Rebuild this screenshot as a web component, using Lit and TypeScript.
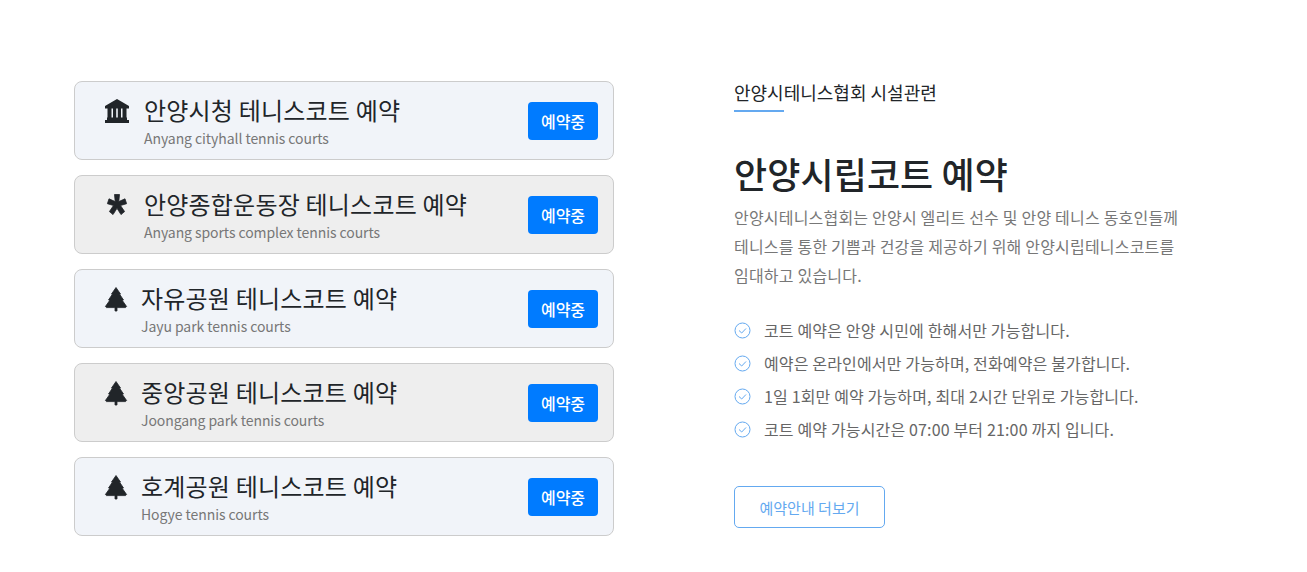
import { LitElement, html, css, svg } from "lit";
import { customElement } from "lit/decorators.js";

const bank = svg`<path d="M13 1 L25 8 V10.5 H1 V8 Z M3.5 10 H7.5 V20 H3.5 Z M9 10 H12.2 V20 H9 Z M13.8 10 H17 V20 H13.8 Z M18.5 10 H22.5 V20 H18.5 Z M3 19.5 H23 V22 H3 Z M1 22 H25 V25 H1 Z" />`;
const asterisk = svg`<path d="M10.5 2.5 H15.5 L14.8 9.6 L21 6.8 L22.6 11.7 L16.5 13.5 L20.6 19.6 L17 22.6 L13 16.3 L9 22.6 L5.4 19.6 L9.5 13.5 L3.4 11.7 L5 6.8 L11.2 9.6 Z" />`;
const tree = svg`<path d="M12 1.5 L16.5 8 H15.5 L19.5 14 H18 L22.6 20.5 L21.5 21.6 H13 V25 H11 V21.6 H2.5 L1.4 20.5 L6 14 H4.5 L8.5 8 H7.5 Z" />`;

const courts = [
  { icon: "bank", title: "안양시청 테니스코트 예약", sub: "Anyang cityhall tennis courts", alt: false },
  { icon: "asterisk", title: "안양종합운동장 테니스코트 예약", sub: "Anyang sports complex tennis courts", alt: true },
  { icon: "tree", title: "자유공원 테니스코트 예약", sub: "Jayu park tennis courts", alt: false },
  { icon: "tree", title: "중앙공원 테니스코트 예약", sub: "Joongang park tennis courts", alt: true },
  { icon: "tree", title: "호계공원 테니스코트 예약", sub: "Hogye tennis courts", alt: false },
];

const rules = [
  "코트 예약은 안양 시민에 한해서만 가능합니다.",
  "예약은 온라인에서만 가능하며, 전화예약은 불가합니다.",
  "1일 1회만 예약 가능하며, 최대 2시간 단위로 가능합니다.",
  "코트 예약 가능시간은 07:00 부터 21:00 까지 입니다.",
];

@customElement("app-root")
export class AppRoot extends LitElement {
  static styles = css`
    * {
      margin: 0;
      padding: 0;
      box-sizing: border-box;
    }
    :host {
      display: block;
      width: 1307px;
      height: 572px;
      background: #fff;
      overflow: hidden;
      font-family: "Noto Sans CJK KR", "Noto Sans", sans-serif;
      color: #212529;
    }
    .page {
      display: flex;
      padding: 81px 0 0 74px;
    }
    .courts {
      width: 540px;
      display: flex;
      flex-direction: column;
      gap: 15px;
    }
    .court {
      height: 79px;
      display: flex;
      align-items: center;
      justify-content: space-between;
      padding: 0 15px 0 29px;
      background: #f1f4f9;
      border: 1px solid #ccc;
      border-radius: 8px;
    }
    .court.alt {
      background: #eee;
    }
    .info {
      display: flex;
      align-items: flex-start;
    }
    .icon {
      flex: none;
      height: 26px;
      margin-top: 5px;
      fill: #212529;
    }
    .icon.bank,
    .icon.asterisk {
      width: 26px;
      margin-right: 14px;
    }
    .icon.tree {
      width: 24px;
      margin-right: 13px;
    }
    .icon.asterisk,
    .icon.tree {
      stroke: #212529;
      stroke-width: 0.8;
      stroke-linejoin: round;
    }
    .court h3 {
      font-size: 24px;
      font-weight: 400;
      line-height: 34px;
      letter-spacing: 0.2px;
    }
    .court p {
      font-size: 14px;
      line-height: 20px;
      margin-top: 1px;
      color: #777;
      letter-spacing: -0.07px;
    }
    .btn {
      width: 70px;
      height: 38px;
      display: flex;
      align-items: center;
      justify-content: center;
      background: #007bff;
      color: #fff;
      border-radius: 4px;
      font-size: 16px;
      font-weight: 500;
    }
    .about {
      margin-left: 120px;
      width: 470px;
    }
    .eyebrow {
      font-size: 18px;
      line-height: 22px;
    }
    .rule {
      width: 50px;
      height: 2px;
      margin-top: 7px;
      background: #64a9f0;
    }
    h1 {
      font-size: 36px;
      font-weight: 500;
      line-height: 50px;
      margin-top: 36px;
      letter-spacing: 0.1px;
    }
    .lead {
      font-size: 16px;
      line-height: 28.8px;
      margin-top: 5px;
      color: #777;
      letter-spacing: 0.2px;
    }
    ul {
      list-style: none;
      margin-top: 24px;
    }
    li {
      display: flex;
      align-items: center;
      gap: 13px;
      height: 33px;
      font-size: 16px;
      letter-spacing: 0.15px;
      color: #666;
    }
    li svg {
      flex: none;
      width: 17px;
      height: 17px;
      margin-top: 2px;
      fill: none;
      stroke: #64a9f0;
      stroke-width: 1;
    }
    .more {
      width: 151px;
      height: 42px;
      margin-top: 41px;
      display: flex;
      align-items: center;
      justify-content: center;
      border: 1px solid #64a9f0;
      border-radius: 5px;
      color: #64a9f0;
      font-size: 15px;
    }
  `;

  renderIcon(name: string) {
    const shape = name === "bank" ? bank : name === "asterisk" ? asterisk : tree;
    const box = name === "tree" ? "0 0 24 26" : "0 0 26 26";
    return html`<svg class="icon ${name}" viewBox=${box}>${shape}</svg>`;
  }

  render() {
    return html`
      <div class="page">
        <div class="courts">
          ${courts.map(
            (c) => html`
              <div class="court ${c.alt ? "alt" : ""}">
                <div class="info">
                  ${this.renderIcon(c.icon)}
                  <div>
                    <h3>${c.title}</h3>
                    <p>${c.sub}</p>
                  </div>
                </div>
                <div class="btn">예약중</div>
              </div>
            `
          )}
        </div>
        <div class="about">
          <div class="eyebrow">안양시테니스협회 시설관련</div>
          <div class="rule"></div>
          <h1>안양시립코트 예약</h1>
          <p class="lead">
            안양시테니스협회는 안양시 엘리트 선수 및 안양 테니스 동호인들께<br />
            테니스를 통한 기쁨과 건강을 제공하기 위해 안양시립테니스코트를<br />
            임대하고 있습니다.
          </p>
          <ul>
            ${rules.map(
              (r) => html`
                <li>
                  <svg viewBox="0 0 17 17">
                    <circle cx="8.5" cy="8.5" r="7.5"></circle>
                    <path d="M5 8.5 L7.7 11 L12 6.5"></path>
                  </svg>
                  <span>${r}</span>
                </li>
              `
            )}
          </ul>
          <div class="more">예약안내 더보기</div>
        </div>
      </div>
    `;
  }
}
